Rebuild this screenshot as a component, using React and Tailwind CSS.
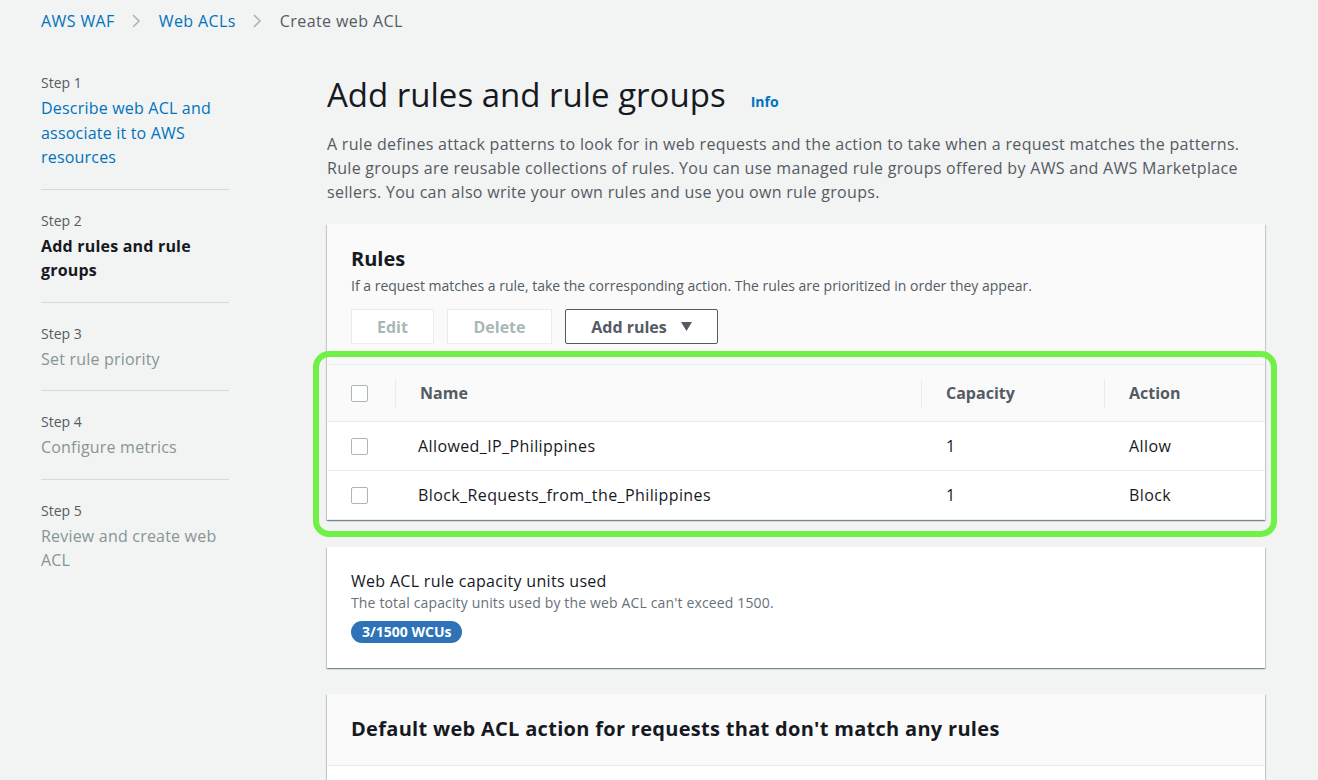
import { useState } from "react";

const STEPS = [
  { label: "Step 1", title: "Describe web ACL and associate it to AWS resources", state: "link" },
  { label: "Step 2", title: "Add rules and rule groups", state: "current" },
  { label: "Step 3", title: "Set rule priority", state: "disabled" },
  { label: "Step 4", title: "Configure metrics", state: "disabled" },
  { label: "Step 5", title: "Review and create web ACL", state: "disabled" },
];

const RULES = [
  { id: 1, name: "Allowed_IP_Philippines", capacity: 1, action: "Allow" },
  { id: 2, name: "Block_Requests_from_the_Philippines", capacity: 1, action: "Block" },
];

const cardShadow =
  "shadow-[0_1px_1px_0_rgba(0,28,36,0.3),1px_1px_1px_0_rgba(0,28,36,0.15),-1px_1px_1px_0_rgba(0,28,36,0.15)]";

function Chevron() {
  return (
    <svg width="10" height="16" viewBox="0 0 10 16" className="ml-[16px] mr-[18px]">
      <polyline points="2,2 8,8 2,14" fill="none" stroke="#aab7b8" strokeWidth="1.6" />
    </svg>
  );
}

function Checkbox({ checked, onChange }) {
  return (
    <button
      onClick={onChange}
      className={`w-[17px] h-[17px] rounded-[2px] border ${
        checked ? "bg-[#0073bb] border-[#0073bb]" : "bg-white border-[#aab7b8]"
      }`}
    />
  );
}

export default function App() {
  const [selected, setSelected] = useState({});

  const toggle = (id) => setSelected((prev) => ({ ...prev, [id]: !prev[id] }));
  const allChecked = RULES.every((r) => selected[r.id]);

  return (
    <div className="min-h-screen bg-[#f2f3f3] font-['Open_Sans',Arial,sans-serif] text-[#16191f] pl-[41px]">
      {/* breadcrumb */}
      <div className="flex items-center pt-[9px] text-[16px] leading-[24px] tracking-[0.4px]">
        <a className="text-[#0073bb]">AWS WAF</a>
        <Chevron />
        <a className="text-[#0073bb]">Web ACLs</a>
        <Chevron />
        <span className="text-[#545b64]">Create web ACL</span>
      </div>

      <div className="flex mt-[40px]">
        {/* steps nav */}
        <nav className="w-[188px] shrink-0">
          {STEPS.map((s, i) => (
            <div
              key={s.label}
              className={`pb-[19px] ${i > 0 ? "border-t border-[#d5dbdb] pt-[21px]" : ""}`}
            >
              <p className="text-[14px] leading-[20px] text-[#545b64] mb-[3px]">{s.label}</p>
              <p
                className={`text-[16px] leading-[24.5px] tracking-[0.2px] ${
                  s.state === "link"
                    ? "text-[#0073bb]"
                    : s.state === "current"
                    ? "font-bold text-[#16191f]"
                    : "text-[#879596]"
                }`}
              >
                {s.title}
              </p>
            </div>
          ))}
        </nav>

        {/* main */}
        <main className="ml-[98px] w-[938px] pt-[2px]">
          <div className="flex items-baseline">
            <h1 className="text-[33px] leading-[40px] font-normal text-[#16191f]">
              Add rules and rule groups
            </h1>
            <a className="ml-[25px] text-[14px] font-bold text-[#0073bb]">Info</a>
          </div>
          <p className="mt-[17px] text-[16px] leading-[24px] tracking-[0.3px] text-[#545b64]">
            A rule defines attack patterns to look for in web requests and the action to take when a
            request matches the patterns. Rule groups are reusable collections of rules. You can use
            managed rule groups offered by AWS and AWS Marketplace sellers. You can also write your own
            rules and use you own rule groups.
          </p>

          {/* rules card */}
          <section className={`mt-[20px] bg-[#fafafa] ${cardShadow}`}>
            <div className="px-6 pt-[23px] pb-[20px]">
              <h2 className="text-[20px] leading-[24px] font-bold">Rules</h2>
              <p className="mt-[5px] text-[14px] leading-[20px] text-[#545b64]">
                If a request matches a rule, take the corresponding action. The rules are prioritized
                in order they appear.
              </p>
              <div className="flex gap-[13px] mt-[13px]">
                <button className="w-[83px] h-[35px] bg-white border border-[#eaeded] text-[16px] font-bold text-[#aab7b8]">
                  Edit
                </button>
                <button className="w-[105px] h-[35px] bg-white border border-[#eaeded] text-[16px] font-bold text-[#aab7b8]">
                  Delete
                </button>
                <button className="w-[153px] h-[35px] bg-white border border-[#545b64] rounded-[2px] text-[16px] font-bold text-[#545b64] flex items-center justify-center gap-[14px]">
                  Add rules
                  <svg width="11" height="9" viewBox="0 0 11 9">
                    <polygon points="0,0 11,0 5.5,9" fill="#545b64" />
                  </svg>
                </button>
              </div>
            </div>

            <div className="relative">
              <table className="w-full border-collapse text-[16px]">
                <thead>
                  <tr className="h-[57px] bg-[#fafafa] border-t border-b border-[#eaeded] text-left text-[#545b64] font-bold">
                    <th className="w-[68px] pl-6">
                      <div className="flex items-center">
                        <Checkbox
                          checked={allChecked}
                          onChange={() =>
                            setSelected(
                              allChecked ? {} : Object.fromEntries(RULES.map((r) => [r.id, true])),
                            )
                          }
                        />
                      </div>
                    </th>
                    <th className="w-[526px] p-0">
                      <div className="border-l border-[#eaeded] h-[29px] flex items-center pl-[24px]">
                        Name
                      </div>
                    </th>
                    <th className="w-[183px] p-0">
                      <div className="border-l border-[#eaeded] h-[29px] flex items-center pl-[24px]">
                        Capacity
                      </div>
                    </th>
                    <th className="p-0">
                      <div className="border-l border-[#eaeded] h-[29px] flex items-center pl-[24px]">
                        Action
                      </div>
                    </th>
                  </tr>
                </thead>
                <tbody className="bg-white tracking-[0.4px]">
                  {RULES.map((r) => (
                    <tr key={r.id} className="h-[49px] border-b border-[#eaeded]">
                      <td className="pl-6">
                        <div className="flex items-center">
                          <Checkbox checked={!!selected[r.id]} onChange={() => toggle(r.id)} />
                        </div>
                      </td>
                      <td className="pl-[23px]">{r.name}</td>
                      <td className="pl-[25px]">{r.capacity}</td>
                      <td className="pl-[25px]">{r.action}</td>
                    </tr>
                  ))}
                </tbody>
              </table>
              {/* highlight annotation */}
              <div className="absolute -left-[14px] -right-[12px] -top-[13px] -bottom-[17px] border-[6px] border-[#6ff245] rounded-[16px] pointer-events-none" />
            </div>
          </section>

          {/* capacity card */}
          <section className={`mt-[27px] bg-white px-6 pt-[22px] pb-[25px] ${cardShadow}`}>
            <h3 className="text-[16px] leading-[24px] tracking-[0.3px]">
              Web ACL rule capacity units used
            </h3>
            <p className="text-[14px] leading-[20px] tracking-[0.15px] text-[#687078]">
              The total capacity units used by the web ACL can't exceed 1500.
            </p>
            <span className="inline-block mt-[8px] h-[22px] px-[11px] rounded-full bg-[#2e73b8] text-white text-[14px] leading-[22px] font-bold">
              3/1500 WCUs
            </span>
          </section>

          {/* default action card */}
          <section className={`mt-[26px] ${cardShadow}`}>
            <div className="bg-[#fafafa] px-6 pt-[23px] pb-[24px] border-b border-[#eaeded]">
              <h2 className="text-[20px] leading-[24px] font-bold tracking-[0.3px]">
                Default web ACL action for requests that don't match any rules
              </h2>
            </div>
            <div className="bg-white h-[80px]" />
          </section>
        </main>
      </div>
    </div>
  );
}
